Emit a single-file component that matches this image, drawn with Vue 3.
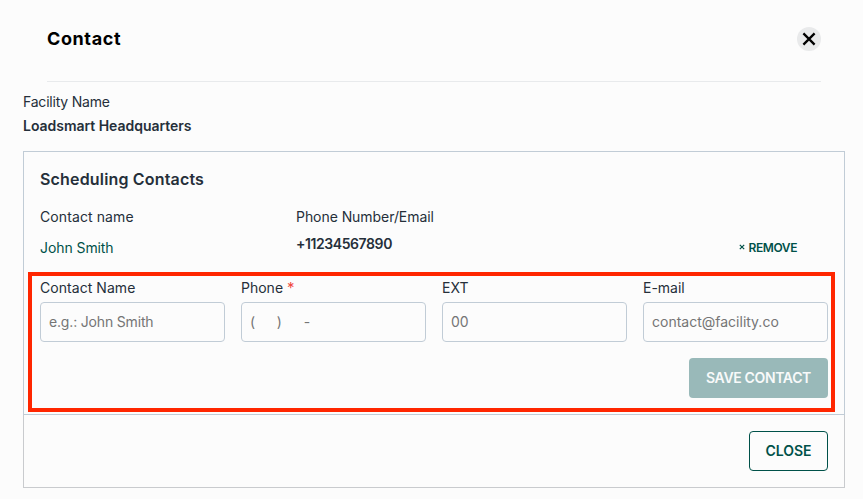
<script setup>
    import { ref } from 'vue'

    const contacts = ref([
        { name: 'John Smith', phone: '+11234567890' }
    ])

    const fields = [
        { id: 'name', label: 'Contact Name', placeholder: 'e.g.: John Smith' },
        { id: 'phone', label: 'Phone', placeholder: '(\u00a0\u00a0\u00a0)\u00a0\u00a0\u00a0-', required: true },
        { id: 'ext', label: 'EXT', placeholder: '00' },
        { id: 'email', label: 'E-mail', placeholder: 'contact@facility.co' }
    ]

    const form = ref({ name: '', phone: '', ext: '', email: '' })

    const removeContact = (idx) => {
        contacts.value.splice(idx, 1)
    }
</script>

<template>
    <main class="modal">
        <header class="modal_header">
            <h1>Contact</h1>
            <button type="button" class="dismiss" aria-label="Close dialog">
                <svg width="24" height="24" viewBox="0 0 24 24">
                    <path d="M6.4 6.4 17.6 17.6M17.6 6.4 6.4 17.6" />
                </svg>
            </button>
        </header>

        <div class="facility">
            <p class="facility_label">Facility Name</p>
            <p class="facility_name">Loadsmart Headquarters</p>
        </div>

        <section class="card">
            <h2>Scheduling Contacts</h2>

            <div class="row row_head">
                <span class="col_name">Contact name</span>
                <span class="col_phone">Phone Number/Email</span>
            </div>
            <div v-for="(item, idx) in contacts" :key="idx" class="row row_contact">
                <a class="contact_name">{{ item.name }}</a>
                <strong class="contact_phone">{{ item.phone }}</strong>
                <button type="button" class="remove" @click="removeContact(idx)">
                    <svg width="6" height="6" viewBox="0 0 6 6">
                        <path d="M.8.8 5.2 5.2M5.2.8.8 5.2" />
                    </svg>
                    <span>REMOVE</span>
                </button>
            </div>

            <form class="contact_form" @submit.prevent>
                <div class="fields">
                    <label v-for="field in fields" :key="field.id" :class="['field', 'field_' + field.id]">
                        <span class="field_label"><span>{{ field.label }}</span><i v-if="field.required">*</i></span>
                        <input v-model="form[field.id]" type="text" :placeholder="field.placeholder">
                    </label>
                </div>
                <button type="submit" class="btn btn_save" disabled><span>SAVE CONTACT</span></button>
            </form>
        </section>

        <footer class="modal_footer">
            <button type="button" class="btn btn_close"><span>CLOSE</span></button>
        </footer>
    </main>
</template>

<style>
    body {
        background-color: #fcfcfc;
    }
</style>

<style scoped>
    .modal {
        box-sizing: border-box;
        height: 499px;
        padding: 0 18px 0 23px;
        background-color: #fcfcfc;
        color: #252f3a;
        font-family: Inter, "Liberation Sans", sans-serif;
        font-size: 14px;
        line-height: 20px;
        overflow: hidden;
    }

    .modal *,
    .modal *::after {
        box-sizing: border-box;
    }

    h1, h2, p {
        margin: 0;
    }

    button {
        padding: 0;
        border: 0;
        background: none;
        font-family: inherit;
        cursor: pointer;
    }

    .modal_header {
        display: flex;
        align-items: center;
        justify-content: space-between;
        height: 82px;
        margin: 0 24px;
        padding-bottom: 3px;
        border-bottom: 1px solid #e8eaec;
    }

    h1 {
        color: #000;
        font-size: 18px;
        font-weight: 700;
        letter-spacing: 0.6px;
        line-height: 24px;
    }

    .dismiss {
        width: 24px;
        height: 24px;
        border-radius: 50%;
        background-color: #e9eaeb;
    }

    .dismiss svg {
        display: block;
        fill: none;
        stroke: #000;
        stroke-width: 2.3;
    }

    .facility {
        height: 69px;
        padding-top: 10px;
    }

    .facility_name {
        width: fit-content;
        margin-top: 4px;
        font-weight: 600;
        letter-spacing: -0.03px;
    }

    .facility_label {
        width: fit-content;
        letter-spacing: -0.21px;
    }

    .card {
        height: 264px;
        padding: 15px 16px 0;
        border: 1px solid #c1ccd6;
    }

    h2 {
        font-size: 16px;
        font-weight: 600;
        letter-spacing: 0.17px;
        line-height: 24px;
    }

    .row {
        display: grid;
        grid-template-columns: 256px 1fr auto;
    }

    .row_head {
        margin-top: 16px;
    }

    .col_name {
        letter-spacing: 0.1px;
    }

    .col_phone {
        letter-spacing: -0.06px;
    }

    .row_contact {
        height: 36px;
        margin-top: 7px;
    }

    .contact_name {
        margin-top: 4px;
        color: #005149;
        letter-spacing: -0.08px;
    }

    .contact_phone {
        font-weight: 600;
        letter-spacing: -0.42px;
    }

    .remove {
        display: flex;
        align-items: center;
        gap: 3px;
        height: 20px;
        margin: 3px 31px 0 0;
        color: #005149;
        font-size: 12px;
        font-weight: 600;
        letter-spacing: -0.4px;
    }

    .remove svg {
        fill: none;
        stroke: currentColor;
        stroke-width: 1.2;
    }

    .contact_form {
        position: relative;
        margin-top: 8px;
    }

    /* Highlight frame around the form */
    .contact_form::after {
        content: '';
        position: absolute;
        top: -6px;
        right: -7px;
        bottom: -14px;
        left: -12px;
        border: 4px solid #ff2600;
        pointer-events: none;
    }

    .fields {
        display: grid;
        grid-template-columns: repeat(4, 1fr);
        gap: 16px;
    }

    .field {
        display: flex;
        flex-direction: column;
        gap: 4px;
        min-width: 0;
    }

    .field_label {
        display: flex;
        gap: 4px;
        height: 20px;
    }

    .field_name .field_label {
        letter-spacing: 0.05px;
    }

    .field_label i {
        color: #f0483e;
        font-size: 15px;
        font-style: normal;
        line-height: 19px;
    }

    input {
        width: 100%;
        height: 40px;
        padding: 0 8px 2px;
        border: 1px solid #c1ccd6;
        border-radius: 4px;
        background-color: #fcfcfc;
        color: #252f3a;
        font-family: inherit;
        font-size: 14px;
        outline: none;
    }

    input::placeholder {
        color: #757575;
        opacity: 1;
    }

    .field_name input {
        letter-spacing: -0.17px;
    }

    .field_phone input {
        word-spacing: 3.3px;
    }

    .btn {
        display: block;
        height: 40px;
        margin-left: auto;
        padding-bottom: 2px;
        border-radius: 4px;
        font-size: 14px;
        font-weight: 600;
    }

    .btn_save {
        width: 139px;
        margin-top: 16px;
        background-color: #99b9b9;
        color: #f8fafa;
        letter-spacing: -0.35px;
    }

    .btn_close {
        width: 79px;
        border: 1px solid #005149;
        color: #005149;
    }

    .modal_footer {
        height: 73px;
        padding: 16px 16px 0;
        border: 1px solid #c9cbce;
        border-top: 0;
    }
</style>
